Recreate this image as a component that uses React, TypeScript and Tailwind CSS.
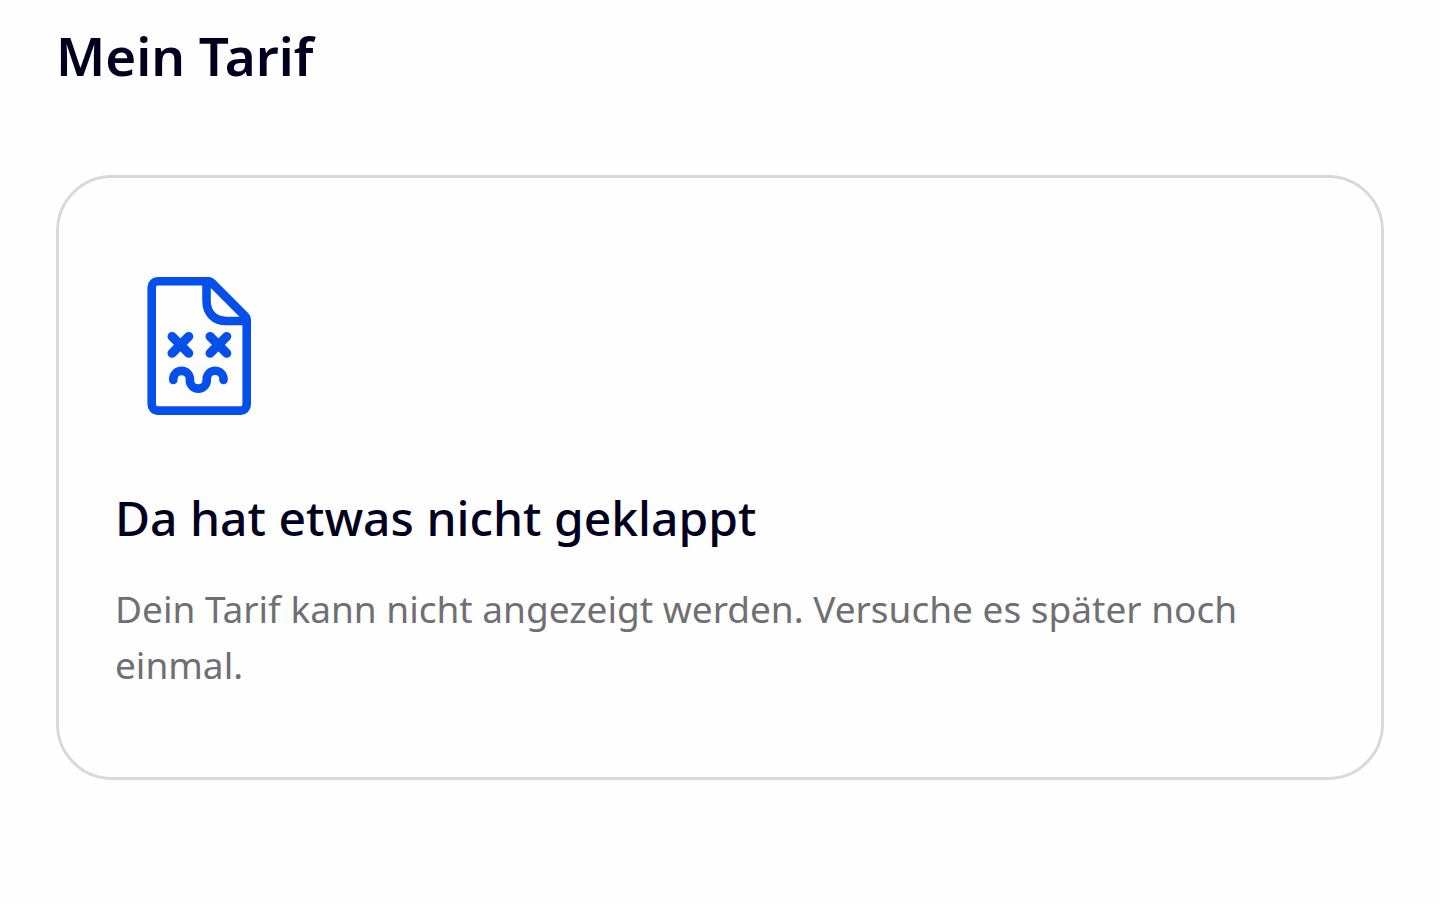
function BrokenDocumentIcon() {
  return (
    <svg
      aria-hidden
      viewBox="0 0 168 168"
      fill="none"
      stroke="currentColor"
      strokeWidth="8.6"
      strokeLinecap="round"
      strokeLinejoin="round"
      className="size-42 text-[#0550eb]"
    >
      {/* sheet with folded corner */}
      <path d="M94 19.3H42.7a6 6 0 0 0-6 6v117.3a6 6 0 0 0 6 6h83a6 6 0 0 0 6-6V57.5a4 4 0 0 0-1.2-2.9L96.4 20.4A4.5 4.5 0 0 0 94 19.3Z" />
      <path d="M91.5 19.8V38.5c0 13 8 20.5 20 20.5h19.5" />
      {/* eyes */}
      <g strokeWidth="9.2">
        <path d="m57.1 74.6 16.6 16.6m0-16.6L57.1 91.2" />
        <path d="m95.1 74.6 16.6 16.6m0-16.6L95.1 91.2" />
      </g>
      {/* mouth */}
      <path d="M58.3 118v-.8a8.3 8.3 0 0 1 16.6 0v1a8.4 8.4 0 0 0 16.8 0v-1a8.4 8.4 0 0 1 16.8 0v.8" />
    </svg>
  )
}

export default function App() {
  return (
    <main className="min-h-screen bg-[#fefefe] px-14 pt-5 pb-14 font-['Noto_Sans',sans-serif] text-[#00001e]">
      <h1 className="text-[53px] leading-[72px] font-semibold">Mein Tarif</h1>

      <section
        aria-labelledby="error-heading"
        className="mt-[83px] rounded-[56px] border-3 border-[#d9d9dc] px-14 py-21"
      >
        <BrokenDocumentIcon />
        <h2 id="error-heading" className="mt-14 text-5xl leading-16 font-medium">
          Da hat etwas nicht geklappt
        </h2>
        <p className="mt-[31px] text-[37px] leading-14 text-[#6f6f74]">
          Dein Tarif kann nicht angezeigt werden. Versuche es später noch einmal.
        </p>
      </section>
    </main>
  )
}
